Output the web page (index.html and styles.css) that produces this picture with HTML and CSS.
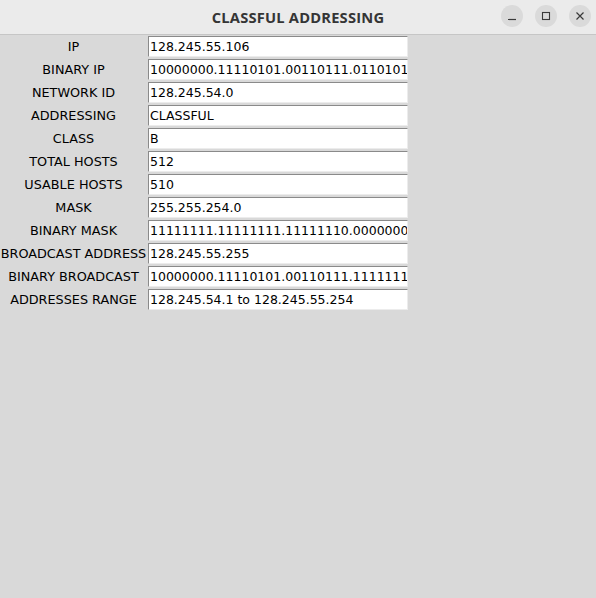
FILE: index.html
```html
<!DOCTYPE html>
<html>
<head>
<meta charset="utf-8">
<link rel="stylesheet" href="styles.css">
</head>
<body>
<div class="window">
  <header class="titlebar">
    <div class="title">CLASSFUL ADDRESSING</div>
    <div class="controls">
      <span class="btn"><svg width="10" height="10" viewBox="0 0 10 10"><path d="M1 8.5h8" stroke="#3a3a3a" stroke-width="1.2"/></svg></span>
      <span class="btn"><svg width="10" height="10" viewBox="0 0 10 10"><rect x="1.5" y="1.5" width="7" height="7" fill="none" stroke="#3a3a3a" stroke-width="1.1"/></svg></span>
      <span class="btn"><svg width="10" height="10" viewBox="0 0 10 10"><path d="M1.5 1.5l7 7M8.5 1.5l-7 7" stroke="#3a3a3a" stroke-width="1.2"/></svg></span>
    </div>
  </header>
  <main class="form">
    <div class="label">IP</div><div class="cell"><div class="entry">128.245.55.106</div></div>
    <div class="label">BINARY IP</div><div class="cell"><div class="entry">10000000.11110101.00110111.01101010</div></div>
    <div class="label">NETWORK ID</div><div class="cell"><div class="entry">128.245.54.0</div></div>
    <div class="label">ADDRESSING</div><div class="cell"><div class="entry">CLASSFUL</div></div>
    <div class="label">CLASS</div><div class="cell"><div class="entry">B</div></div>
    <div class="label">TOTAL HOSTS</div><div class="cell"><div class="entry">512</div></div>
    <div class="label">USABLE HOSTS</div><div class="cell"><div class="entry">510</div></div>
    <div class="label">MASK</div><div class="cell"><div class="entry">255.255.254.0</div></div>
    <div class="label">BINARY MASK</div><div class="cell"><div class="entry">11111111.11111111.11111110.00000000</div></div>
    <div class="label">BROADCAST ADDRESS</div><div class="cell"><div class="entry">128.245.55.255</div></div>
    <div class="label">BINARY BROADCAST</div><div class="cell"><div class="entry">10000000.11110101.00110111.11111111</div></div>
    <div class="label">ADDRESSES RANGE</div><div class="cell"><div class="entry">128.245.54.1 to 128.245.55.254</div></div>
  </main>
</div>
</body>
</html>
```

FILE: styles.css
```css
html, body {
  margin: 0;
  padding: 0;
}
body {
  width: 596px;
  height: 598px;
  background: #d9d9d9;
  font-family: "DejaVu Sans", sans-serif;
  overflow: hidden;
}
.window {
  width: 596px;
  height: 598px;
  background: #d9d9d9;
}
.titlebar {
  box-sizing: border-box;
  height: 35px;
  background: #ebebeb;
  border-bottom: 1px solid #c6c6c6;
  display: flex;
  align-items: center;
  justify-content: center;
  position: relative;
}
.title {
  font-family: "Open Sans", "DejaVu Sans", sans-serif;
  font-weight: bold;
  font-size: 14.7px;
  color: #353535;
  letter-spacing: 0.2px;
}
.controls {
  position: absolute;
  right: 5px;
  top: 5px;
  display: flex;
  gap: 12px;
}
.btn {
  width: 22px;
  height: 22px;
  border-radius: 50%;
  background: #dadada;
  display: flex;
  align-items: center;
  justify-content: center;
}
.form {
  display: grid;
  grid-template-columns: 147px 262px;
  grid-auto-rows: 23px;
}
.label {
  font-size: 12.8px;
  color: #000;
  display: flex;
  align-items: center;
  justify-content: center;
  white-space: nowrap;
  line-height: 23px;
}
.cell {
  padding: 1px;
  box-sizing: border-box;
}
.entry {
  height: 21px;
  box-sizing: border-box;
  background: #ffffff;
  border-top: 1px solid #8a8a8a;
  border-left: 1px solid #8a8a8a;
  border-right: 1px solid #ececec;
  border-bottom: 1px solid #ececec;
  font-size: 12.5px;
  color: #000;
  line-height: 19px;
  padding-left: 1px;
  white-space: nowrap;
  overflow: hidden;
}
```
